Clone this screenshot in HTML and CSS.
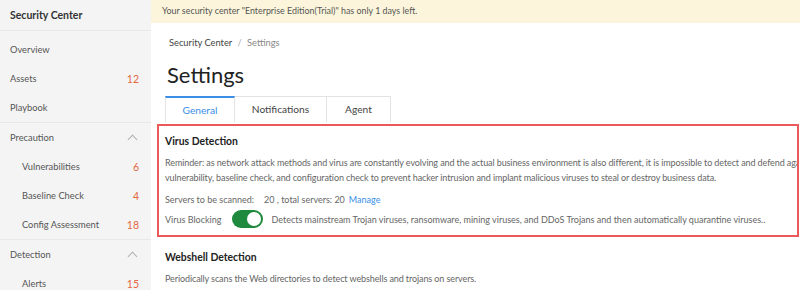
FILE: index.html
```html
<!DOCTYPE html>
<html lang="en">
<head>
  <meta charset="UTF-8">
  <title>Settings - Security Center</title>
  <link rel="stylesheet" href="styles.css">
</head>
<body>
  <div class="layout">
    <aside class="sidebar">
      <div class="side-title">Security Center</div>
      <div class="side-group first">
        <div class="side-item">Overview</div>
        <div class="side-item">Assets <span class="count">12</span></div>
        <div class="side-item">Playbook</div>
      </div>
      <div class="side-group">
        <div class="side-item">Precaution <span class="chev"></span></div>
        <div class="side-item sub">Vulnerabilities <span class="count">6</span></div>
        <div class="side-item sub">Baseline Check <span class="count">4</span></div>
        <div class="side-item sub">Config Assessment <span class="count">18</span></div>
      </div>
      <div class="side-group">
        <div class="side-item">Detection <span class="chev"></span></div>
        <div class="side-item sub">Alerts <span class="count">15</span></div>
      </div>
    </aside>

    <main class="main">
      <div class="notice">Your security center "Enterprise Edition(Trial)" has only 1 days left.</div>
      <div class="content">
        <div class="breadcrumb">Security Center <span class="sep">/</span> <span class="current">Settings</span></div>
        <h1 class="page-title">Settings</h1>
        <div class="tabs">
          <div class="tab active">General</div>
          <div class="tab">Notifications</div>
          <div class="tab">Agent</div>
        </div>
      </div>

      <section class="panel highlighted">
        <h3>Virus Detection</h3>
        <p>Reminder: as network attack methods and virus are constantly evolving and the actual business environment is also different, it is impossible to detect and defend against all viruses. We recommend that you fix the<br>vulnerability, baseline check, and configuration check to prevent hacker intrusion and implant malicious viruses to steal or destroy business data.</p>
        <div class="row">Servers to be scanned: <span class="num">20 , total servers: 20</span> <a class="link">Manage</a></div>
        <div class="row">
          Virus Blocking
          <span class="switch"><span class="knob"></span></span>
          Detects mainstream Trojan viruses, ransomware, mining viruses, and DDoS Trojans and then automatically quarantine viruses..
        </div>
      </section>

      <section class="panel">
        <h3>Webshell Detection</h3>
        <p>Periodically scans the Web directories to detect webshells and trojans on servers.</p>
      </section>
    </main>
  </div>
</body>
</html>
```

FILE: styles.css
```css
body {
  margin: 0;
  font-family: Lato, "Open Sans", sans-serif;
  color: #333;
  overflow: hidden;
}

.layout {
  display: flex;
  height: 290px;
}

.sidebar {
  width: 151px;
  flex-shrink: 0;
  background: #f4f4f4;
}

.side-title {
  height: 31px;
  line-height: 30px;
  padding-left: 10px;
  font-size: 10.5px;
  font-weight: 700;
  color: #333;
  border-bottom: 1px solid #e8e8e8;
  box-sizing: border-box;
}

.side-group {
  border-bottom: 1px solid #e8e8e8;
}

.side-group.first {
  padding-top: 4px;
}

.side-item {
  height: 29px;
  display: flex;
  align-items: center;
  justify-content: space-between;
  padding: 0 12px 0 10px;
  font-size: 9.3px;
  color: #555;
}

.side-item.sub {
  padding-left: 22px;
}

.count {
  color: #e5673f;
  font-size: 10.5px;
}

.chev {
  width: 6px;
  height: 6px;
  margin-top: 4px;
  margin-right: 3px;
  border-left: 1px solid #b0b0b0;
  border-top: 1px solid #b0b0b0;
  transform: rotate(45deg);
}

.main {
  flex: 1;
  min-width: 0;
  overflow: hidden;
}

.notice {
  height: 23px;
  line-height: 22px;
  padding-left: 11px;
  background: #fdf5db;
  font-size: 8.9px;
  color: #555;
  white-space: nowrap;
}

.content {
  padding: 0 14px;
}

.breadcrumb {
  margin: 13px 0 0 4px;
  line-height: 14px;
  font-size: 9.3px;
  color: #444;
}

.breadcrumb .sep {
  color: #aaa;
  margin: 0 3px;
}

.breadcrumb .current {
  color: #888;
}

.page-title {
  margin: 10px 0 0 2px;
  font-size: 22px;
  font-weight: 400;
  color: #222;
  line-height: 30px;
}

.tabs {
  display: flex;
  margin-top: 6px;
}

.tab {
  height: 26px;
  box-sizing: border-box;
  line-height: 25px;
  text-align: center;
  font-size: 10.2px;
  color: #444;
  border-top: 1px solid #e3e3e3;
  border-right: 1px solid #e3e3e3;
}

.tab:nth-child(1) {
  width: 70px;
  border-left: 1px solid #e3e3e3;
}

.tab:nth-child(2) {
  width: 92px;
}

.tab:nth-child(3) {
  width: 64px;
}

.tab.active {
  color: #3a8ee6;
  border-top: 2px solid #3a8ee6;
  line-height: 24px;
}

.panel {
  margin-left: 6px;
  padding: 12px 0 0 8px;
  white-space: nowrap;
}

.panel.highlighted {
  box-sizing: border-box;
  height: 113px;
  margin: 2px 1px 0 6px;
  padding: 7px 0 0 6px;
  border: 2px solid #ea5a5a;
  overflow: hidden;
}

.panel h3 {
  margin: 0 0 6px;
  line-height: 16px;
  font-size: 10.4px;
  font-weight: 700;
  color: #222;
}

.panel p {
  margin: 0;
  font-size: 9px;
  letter-spacing: -0.1px;
  line-height: 15px;
  color: #666;
}

.row {
  display: flex;
  align-items: center;
  height: 18px;
  margin-top: 2px;
  font-size: 9px;
  color: #666;
}

.panel p + .row {
  margin-top: 5px;
}

.num {
  margin-left: 10px;
}

.link {
  color: #3a8ee6;
  margin-left: 4px;
}

.switch {
  position: relative;
  width: 31px;
  height: 18px;
  border-radius: 9px;
  background: #1f8a3d;
  margin: 0 8px 0 11px;
}

.knob {
  position: absolute;
  right: 2px;
  top: 2px;
  width: 14px;
  height: 14px;
  border-radius: 50%;
  background: #fff;
}
```
